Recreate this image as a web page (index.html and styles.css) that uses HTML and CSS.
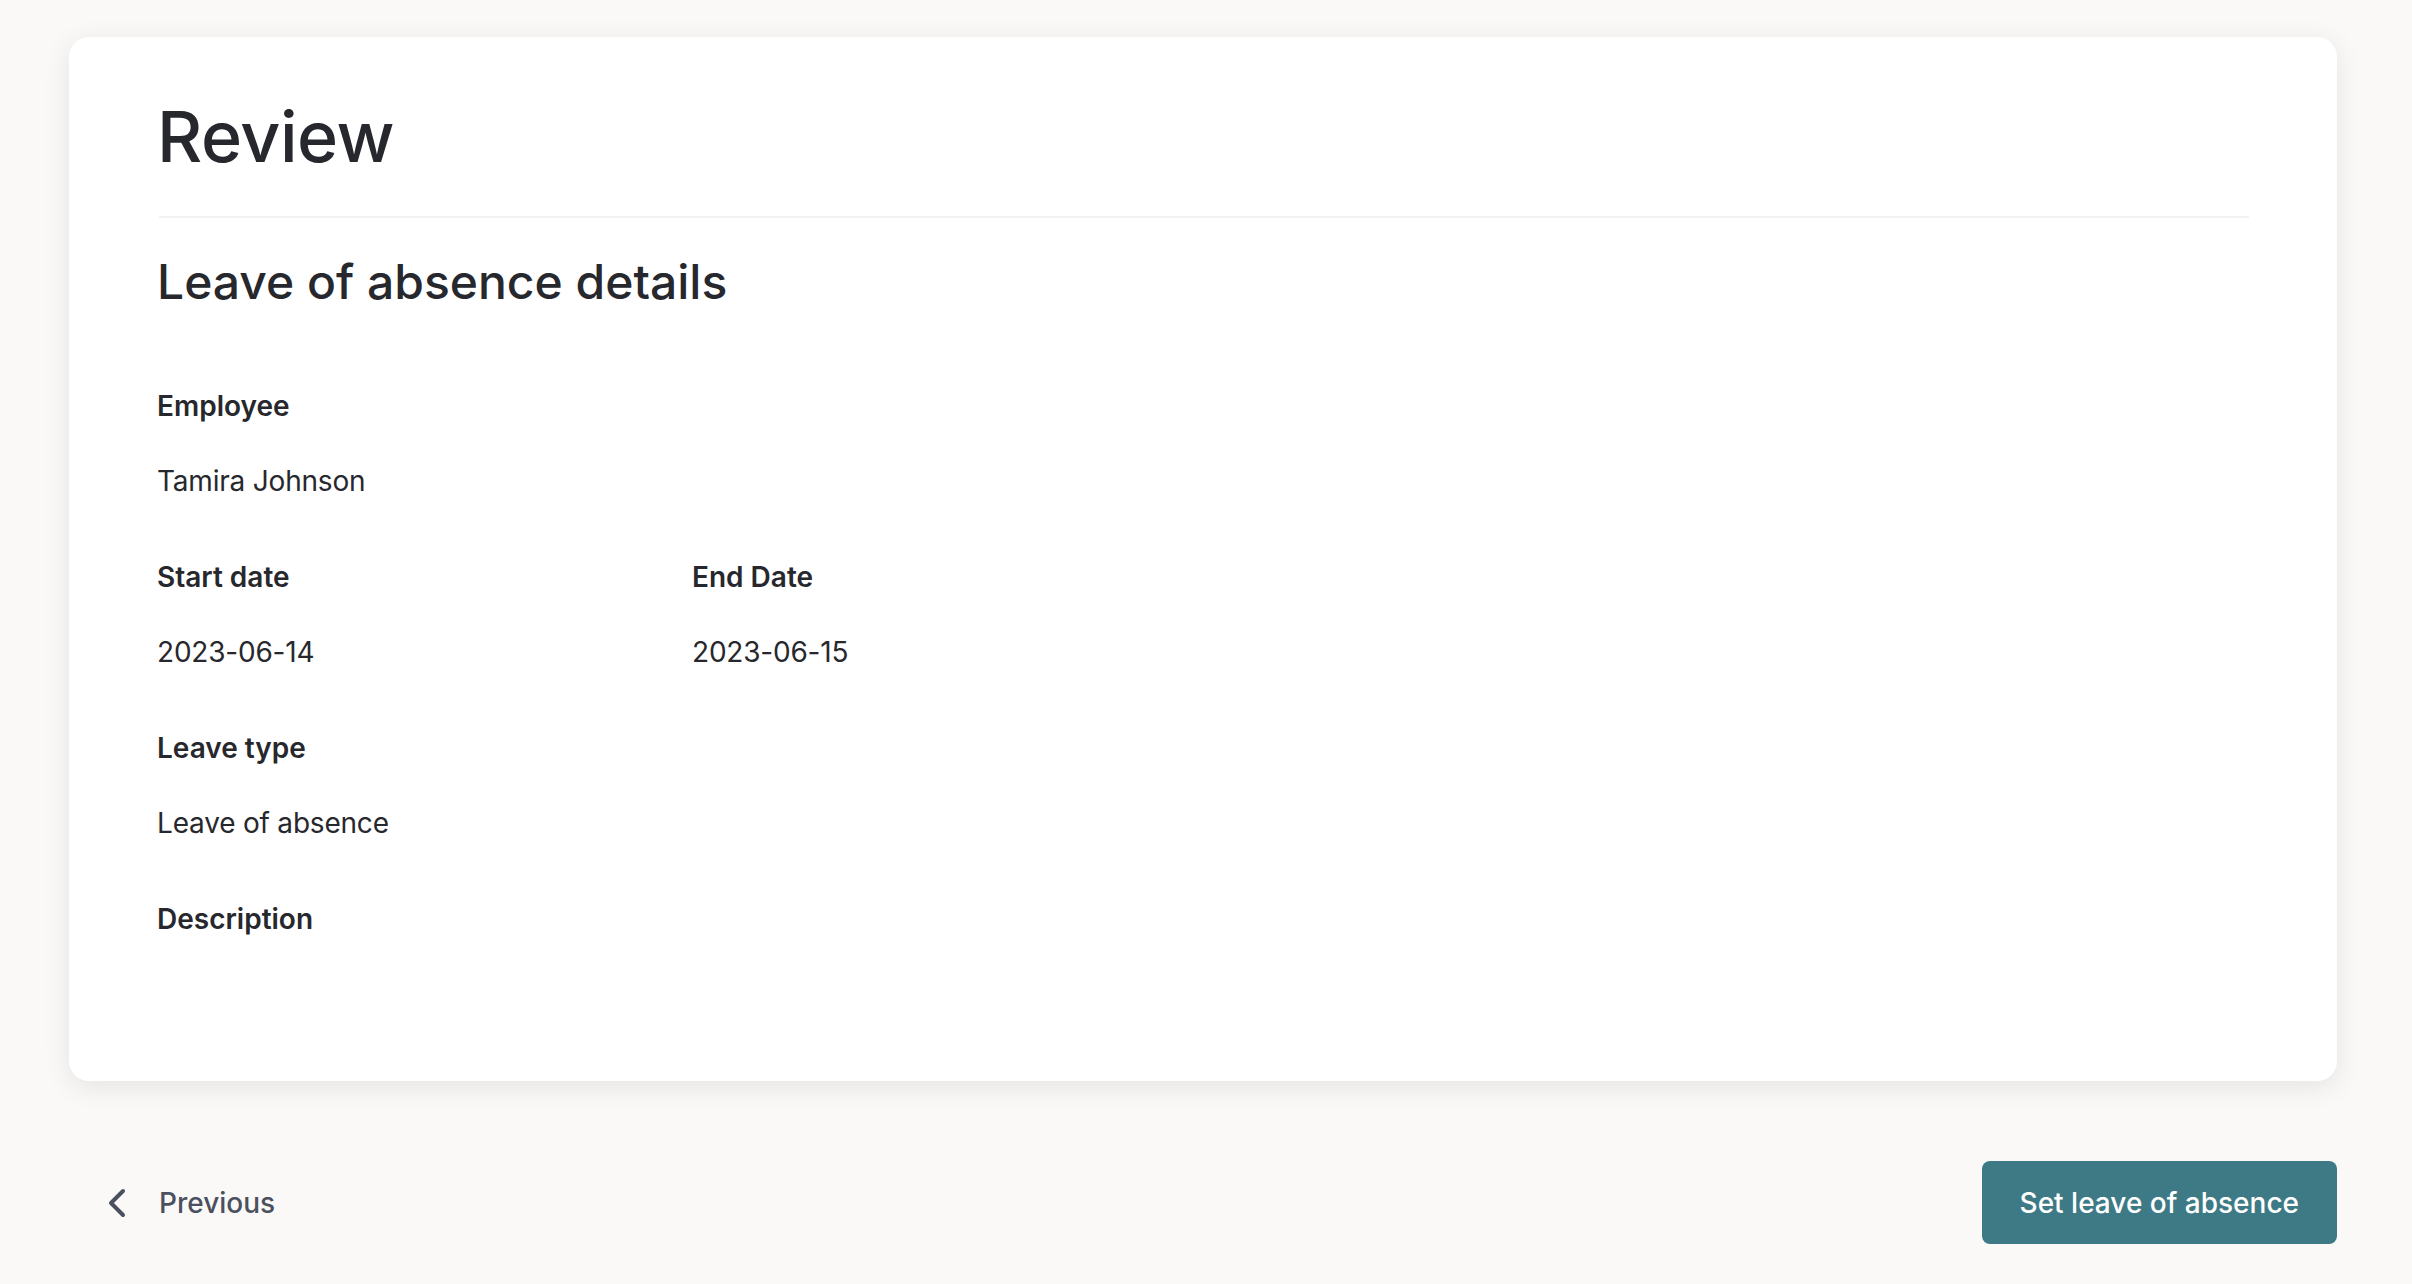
FILE: index.html
```html
<!DOCTYPE html>
<html lang="en">
<head>
<meta charset="utf-8">
<title>Review</title>
<link rel="stylesheet" href="styles.css">
</head>
<body>
<main class="page">
  <section class="card">
    <h1 class="title">Review</h1>
    <hr class="divider">
    <h2 class="subtitle">Leave of absence details</h2>
    <div class="fields">
      <div class="field">
        <div class="label">Employee</div>
        <div class="value">Tamira Johnson</div>
      </div>
      <div class="field-row">
        <div class="field">
          <div class="label">Start date</div>
          <div class="value">2023-06-14</div>
        </div>
        <div class="field">
          <div class="label">End Date</div>
          <div class="value">2023-06-15</div>
        </div>
      </div>
      <div class="field">
        <div class="label">Leave type</div>
        <div class="value">Leave of absence</div>
      </div>
      <div class="field">
        <div class="label">Description</div>
        <div class="value"></div>
      </div>
    </div>
  </section>
  <footer class="actions">
    <button class="btn btn-ghost" type="button">
      <svg class="chev" width="20" height="30" viewBox="0 0 20 30" aria-hidden="true"><path d="M16 3 L4 15 L16 27" fill="none" stroke="currentColor" stroke-width="4" stroke-linecap="round" stroke-linejoin="round"/></svg>
      <span>Previous</span>
    </button>
    <button class="btn btn-primary" type="button">Set leave of absence</button>
  </footer>
</main>
</body>
</html>
```

FILE: styles.css
```css
* { box-sizing: border-box; }
html, body { margin: 0; padding: 0; }
body {
  background: #faf9f7;
  font-family: Inter, "Noto Sans", sans-serif;
  color: #27282d;
}
.page {
  padding: 37px 75px 0 69px;
}
.card {
  background: #ffffff;
  border-radius: 20px;
  box-shadow: 0 6px 28px rgba(0, 0, 0, 0.09);
  padding: 58px 88px 142px 88px;
}
.title {
  margin: 0;
  font-size: 70px;
  line-height: 84px;
  font-weight: 500;
  letter-spacing: -0.5px;
}
.divider {
  border: 0;
  height: 2px;
  background: #f3f2f0;
  margin: 37px 0 0 2px;
}
.subtitle {
  margin: 34px 0 0 0;
  font-size: 48px;
  line-height: 60px;
  font-weight: 500;
}
.fields {
  margin-top: 74px;
  display: flex;
  flex-direction: column;
  gap: 56px;
}
.field-row {
  display: grid;
  grid-template-columns: 535px 535px;
}
.field {
  display: flex;
  flex-direction: column;
  gap: 35px;
}
.label {
  font-size: 28px;
  line-height: 40px;
  font-weight: 600;
}
.value {
  font-size: 28px;
  line-height: 40px;
  font-weight: 400;
  letter-spacing: -0.2px;
}
.value:empty { display: none; }
.actions {
  margin-top: 80px;
  display: flex;
  justify-content: space-between;
  align-items: center;
}
.btn {
  height: 83px;
  padding: 0 38px;
  border: 0;
  border-radius: 8px;
  font-family: Inter, "Noto Sans", sans-serif;
  font-size: 28px;
  font-weight: 500;
  display: flex;
  align-items: center;
  cursor: pointer;
}
.btn-ghost {
  background: transparent;
  color: #4a5060;
  gap: 32px;
}
.chev { display: block; }
.btn-primary {
  background: #3d7a85;
  color: #ffffff;
}
```
